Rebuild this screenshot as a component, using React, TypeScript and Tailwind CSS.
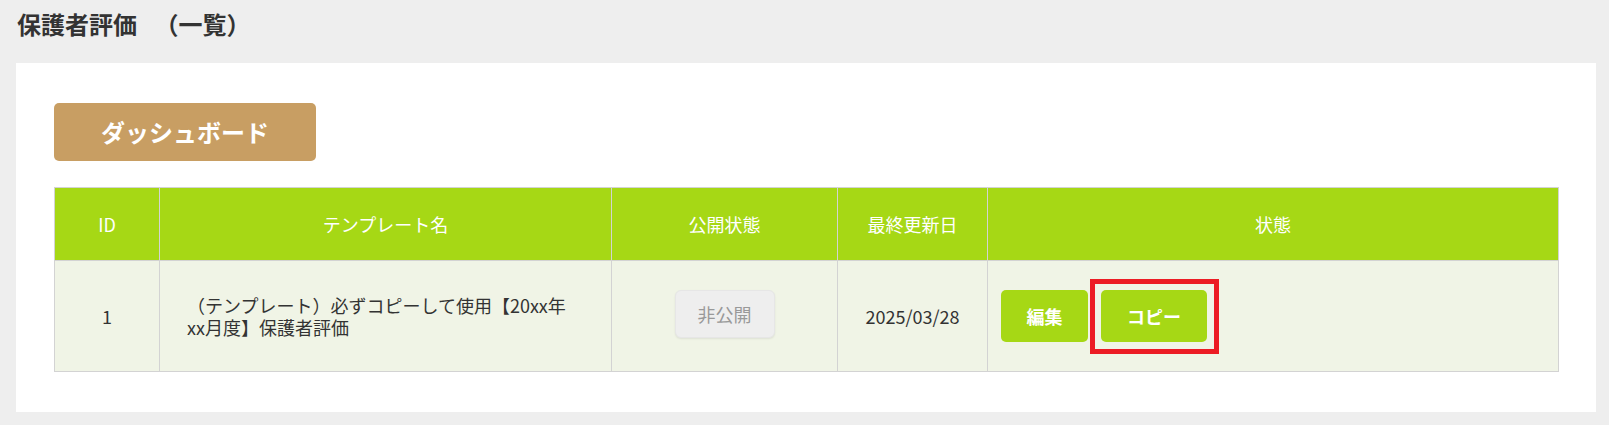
const rows = [
  {
    id: 1,
    name: "（テンプレート）必ずコピーして使用【20xx年xx月度】保護者評価",
    status: "非公開",
    updated: "2025/03/28",
  },
];

export default function App() {
  return (
    <div className="min-h-[425px] bg-[#eeeeee] pt-[9px] pb-[13px] font-['Noto_Sans_CJK_JP','Noto_Sans',sans-serif] text-[#333333]">
      <h1 className="ml-[17px] text-[24px] font-bold leading-[30px] text-[#333333]">
        保護者評価 <span className="ml-[12px]">（一覧）</span>
      </h1>

      <div className="ml-[16px] mt-[24px] w-[1580px] bg-white px-[38px] py-[40px]">
        <button className="h-[58px] w-[262px] rounded-[5px] bg-[#c89e63] text-[24px] font-bold leading-none text-white">
          ダッシュボード
        </button>

        <table className="mt-[26px] w-[1505px] table-fixed border-collapse text-[18px]">
          <colgroup>
            <col className="w-[105px]" />
            <col className="w-[452px]" />
            <col className="w-[226px]" />
            <col className="w-[150px]" />
            <col />
          </colgroup>
          <thead>
            <tr className="h-[73px] bg-[#a6d815] text-white">
              <th className="border border-[#d3d3d3] font-normal">ID</th>
              <th className="border border-[#d3d3d3] font-normal">テンプレート名</th>
              <th className="border border-[#d3d3d3] font-normal">公開状態</th>
              <th className="border border-[#d3d3d3] font-normal">最終更新日</th>
              <th className="border border-[#d3d3d3] font-normal">状態</th>
            </tr>
          </thead>
          <tbody>
            {rows.map((r) => (
              <tr key={r.id} className="h-[111px] bg-[#f0f4e6]">
                <td className="border border-[#d3d3d3] text-center align-middle">{r.id}</td>
                <td className="border border-[#d3d3d3] pl-[27px] pr-[44px] text-left align-middle leading-[22px]">
                  {r.name}
                </td>
                <td className="border border-[#d3d3d3] align-middle">
                  <div className="mx-auto mb-[4px] flex h-[48px] w-[100px] items-center justify-center rounded-[6px] border border-[#e6e6e6] bg-[#eeeeee] text-[#999999] shadow-[0_1px_2px_rgba(0,0,0,0.08)]">
                    {r.status}
                  </div>
                </td>
                <td className="border border-[#d3d3d3] text-center align-middle">{r.updated}</td>
                <td className="border border-[#d3d3d3] pl-[13px] align-middle">
                  <div className="flex items-center gap-[13px]">
                    <button className="h-[52px] w-[87px] rounded-[5px] bg-[#a6d815] font-bold text-white">
                      編集
                    </button>
                    <div className="relative">
                      <button className="h-[52px] w-[106px] rounded-[5px] bg-[#a6d815] font-bold text-white">
                        コピー
                      </button>
                      <div className="absolute -top-[11px] -left-[11px] -right-[12px] -bottom-[12px] border-[5px] border-[#ec1c24]" />
                    </div>
                  </div>
                </td>
              </tr>
            ))}
          </tbody>
        </table>
      </div>
    </div>
  );
}
